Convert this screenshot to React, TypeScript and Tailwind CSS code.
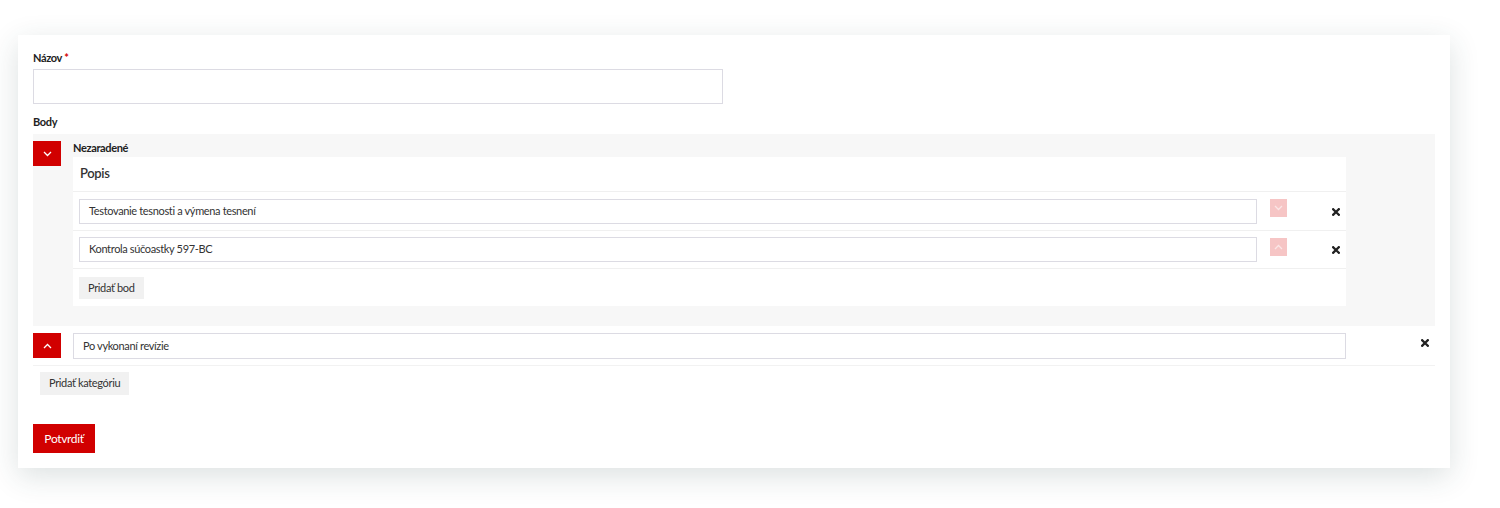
import React from "react";

const Chevron = ({ up, color = "#fff" }: { up?: boolean; color?: string }) => (
  <svg width="9" height="6" viewBox="0 0 9 6" fill="none">
    {up ? (
      <polyline points="1,5 4.5,1.5 8,5" stroke={color} strokeWidth="1.3" />
    ) : (
      <polyline points="1,1 4.5,4.5 8,1" stroke={color} strokeWidth="1.3" />
    )}
  </svg>
);

const XIcon = () => (
  <svg width="8" height="8" viewBox="0 0 8 8">
    <path d="M1.2 1.2L6.8 6.8M6.8 1.2L1.2 6.8" stroke="#222" strokeWidth="2.3" strokeLinecap="square" />
  </svg>
);

const font = { fontFamily: "Lato, 'Noto Sans', sans-serif", letterSpacing: "-0.35px" };

export default function App() {
  return (
    <div className="min-h-[508px] bg-white pt-[35px] pl-[18px] pr-[50px]" style={font}>
      <div className="w-[1432px] h-[433px] bg-white shadow-[0_8px_28px_rgba(40,70,70,0.16)] px-[15px] pt-[16px]">
        <label className="block text-[11px] font-bold text-[#222] leading-[14px]">
          Názov <span className="text-[#d40000]">*</span>
        </label>
        <input className="mt-[4px] block w-[690px] h-[35px] border border-[#dcdbe3] outline-none" />
        <div className="mt-[11px] text-[11px] font-bold text-[#222] leading-[14px]">Body</div>

        <div className="mt-[5px] bg-[#f7f7f7] pt-[7px] pb-[20px] flex">
          <button className="w-[28px] h-[25px] bg-[#d10000] flex items-center justify-center shrink-0">
            <Chevron />
          </button>
          <div className="ml-[12px] w-[1273px]">
            <div className="text-[11px] font-bold text-[#222] leading-[14px] pb-[2px]">Nezaradené</div>
            <div className="bg-white">
              <div className="h-[35px] flex items-center px-[7px] text-[13px] font-semibold text-[#333] border-b border-[#f0f0f0]">
                Popis
              </div>
              <div className="flex items-start pt-[7px] pb-[6px] pl-[6px] border-b border-[#f0f0f0]">
                <div className="w-[1178px] h-[25px] border border-[#dcdbe3] flex items-center px-[9px] text-[11px] text-[#333]">
                  Testovanie tesnosti a výmena tesnení
                </div>
                <div className="ml-[13px] w-[17px] h-[18px] bg-[#f6c5c5] flex items-center justify-center">
                  <Chevron color="#fbe6e6" />
                </div>
                <div className="ml-[45px] mt-[9px] flex">
                  <XIcon />
                </div>
              </div>
              <div className="flex items-start pt-[6px] pb-[6px] pl-[6px] border-b border-[#f0f0f0]">
                <div className="w-[1178px] h-[25px] border border-[#dcdbe3] flex items-center px-[9px] text-[11px] text-[#333]">
                  Kontrola súčoastky 597-BC
                </div>
                <div className="ml-[13px] mt-[1px] w-[17px] h-[18px] bg-[#f6c5c5] flex items-center justify-center">
                  <Chevron up color="#fbe6e6" />
                </div>
                <div className="ml-[45px] mt-[9px] flex">
                  <XIcon />
                </div>
              </div>
              <div className="flex pt-[8px] pb-[7px] pl-[6px]">
                <button className="h-[22px] px-[9px] bg-[#f1f1f1] text-[11px] text-[#333]">Pridať bod</button>
              </div>
            </div>
          </div>
        </div>

        <div className="flex items-start pt-[7px] pb-[6px] border-b border-[#f2f2f2]">
          <button className="w-[28px] h-[25px] bg-[#d10000] flex items-center justify-center shrink-0">
            <Chevron up />
          </button>
          <div className="ml-[12px] w-[1273px] h-[26px] border border-[#dcdbe3] flex items-center px-[9px] text-[11px] text-[#333]">
            Po vykonaní revízie
          </div>
          <div className="ml-[75px] mt-[6px] flex">
            <XIcon />
          </div>
        </div>
        <div className="flex pt-[6px] pl-[7px]">
          <button className="h-[23px] px-[9px] bg-[#f1f1f1] text-[11px] text-[#333]">Pridať kategóriu</button>
        </div>
        <div className="flex">
          <button className="mt-[29px] w-[62px] h-[29px] bg-[#d10000] text-white text-[12px]">Potvrdiť</button>
        </div>
      </div>
    </div>
  );
}
